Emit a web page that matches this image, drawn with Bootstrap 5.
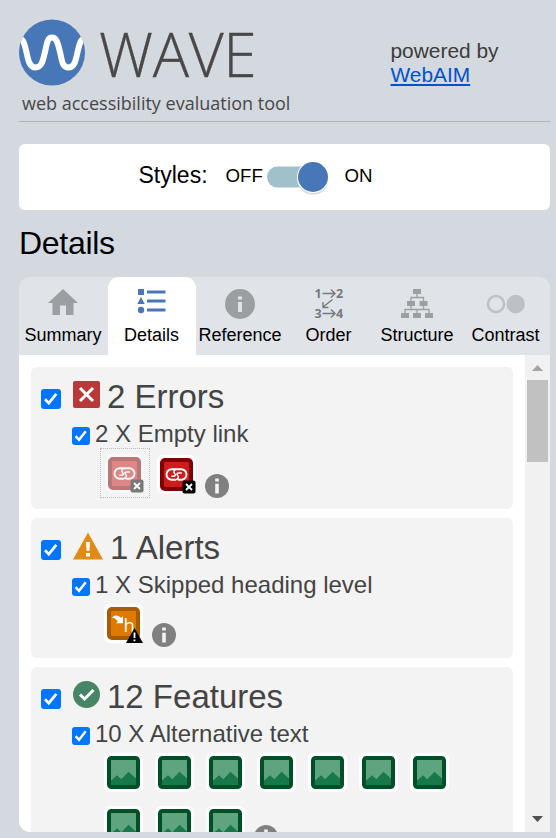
<!DOCTYPE html>
<html lang="en">
<head>
<meta charset="utf-8">
<title>WAVE</title>
<meta name="viewport" content="width=device-width, initial-scale=1">
<link href="https://cdn.jsdelivr.net/npm/bootstrap@5.3.0/dist/css/bootstrap.min.css" rel="stylesheet">
<style>
html,body{height:100%;overflow:hidden}
body{background:#d4d8df;color:#000;font-family:"Liberation Sans",Arial,sans-serif;line-height:1}
svg{display:block;flex:none}
.side{height:832px;padding:0 6px 0 19px}
.top-bar{height:122px;border-bottom:1px solid #aeb3b7}
.brand{width:371.5px;padding-top:19px}
.brand-name{font:300 60.5px/69px "Open Sans",sans-serif;color:#484848;height:67px;margin-left:14px;letter-spacing:-.3px;-webkit-text-stroke:.35px #484848}
.tagline{font:400 18px/26px "Open Sans",sans-serif;color:#484848;margin:4px 0 0 3px;white-space:nowrap}
.powered{font-size:20.9px;line-height:24px;color:#3c3c3c;padding-top:39px}
.powered a{color:#0052cc;text-underline-offset:2px;text-decoration-thickness:2px}
.styles-box{height:66px;margin-top:22px;border-radius:6px;padding-left:119.5px}
.styles-label{font-size:23px;line-height:62px;width:87px}
.onoff{font-size:18.7px;line-height:63px}
.toggle{width:62px;height:34px;margin:17px 0 0 3.5px}
.title{font-size:32px;line-height:40px;margin:13px 0 14px;font-weight:400;letter-spacing:-.3px}
.tab-strip{height:78px;background:#e0e3e8;border-radius:11px 11px 0 0}
.tab-strip .nav-link{padding:6px 0 0;color:#000;font-size:18px;border-radius:11px 11px 0 0;text-align:center;height:78px;white-space:nowrap}
.tab-strip .nav-link.active{background:#fff}
.tab-strip svg{margin:0 auto}
.tab-strip span{display:block;line-height:24px;margin-left:-.5px}
.panel{height:477px;border-radius:0 0 0 11px;overflow:hidden}
.results{width:506px;padding:12px 12px 0}
.group{background:#f3f3f3;border-radius:6px;margin-bottom:9px;color:#444;padding-left:10px}
.g1{height:142px}.g2{height:140px}.g3{height:190px}
.g-head{height:51px;font-size:33px;line-height:43px;padding-top:8px}
.g-head h3{font:inherit;margin:0}
.g-sub{height:31px;font-size:24px;line-height:31px;padding-left:31px;white-space:nowrap}
.box{background:#0075ff;border-radius:3px;width:20px;height:20px}
.g-head .box{margin:14px 12px 0 0}
.g-sub .box{width:18px;height:18px;margin:9px 5px 0 0}
.g-head .sym{margin:6px 7px 0 0}
.icons{padding-left:63px}
.next-row{padding-top:14px}
.tile{width:39px;height:39px;margin-right:12px}
.info{width:24px;height:24px;margin-top:19px;margin-left:-3px}
.picked{border:1px dotted #bbb;width:50px;height:50px;padding:5px 0 0 4px;margin:-1px 7px 0 -4px}
.picked svg{opacity:.5}
.linked{margin-top:6px}
.linked + .info{margin-top:25px}
.track{width:25px;background:#f1f1f1;padding-top:12px}
.thumb{width:21px;height:82px;background:#c1c1c1;margin-top:9px}
</style>
<script src="https://cdn.jsdelivr.net/npm/bootstrap@5.3.0/dist/js/bootstrap.bundle.min.js"></script>
</head>
<body>
<svg width="0" height="0" class="position-absolute" aria-hidden="true">
<defs>
<symbol id="check" viewBox="0 0 20 20"><path d="M4 10.2l3.8 4L15.3 4.8" fill="none" stroke="#fff" stroke-width="2.7"/></symbol>
<symbol id="info" viewBox="0 0 24 24"><circle cx="12" cy="12" r="12" fill="#808080"/><path d="M10.2 4.5h3.6v3h-3.6zM10.2 9.8h3.6v9.700h-3.6z" fill="#f3f3f3"/></symbol>
<symbol id="link" viewBox="0 0 39 39"><rect width="38.5" height="38.5" rx="6" fill="#fff"/><rect x="5" y="5" width="29" height="29" rx="3" fill="#cc1c1c" stroke="#800000" stroke-width="4"/>
<g fill="none" stroke="#fff" stroke-width="1.9" stroke-linecap="round"><path d="M18 24.800h-3.200a5.300 5.300 0 0 1 0-10.600h9.400a5.300 5.300 0 0 1 0 10.600h-2.700"/><path d="M24.300 17.900h-2.800c-2 0-1.900 1.700-.7 2.600 1.200 1 .6 4-2.600 4.300M19 14.300c-2.400.6-2.600 3.200-1.200 4.400 1 .9.700 2.600-1 2.600h-2" stroke-width="1.500"/></g>
<rect x="25.500" y="25.500" width="13" height="13" rx="2" fill="#000"/><path d="M29 29l6 6M35 29l-6 6" stroke="#fff" stroke-width="1.900"/></symbol>
<symbol id="alt" viewBox="0 0 39 39"><rect width="39" height="39" rx="6" fill="#fff"/><rect x="5" y="5" width="29" height="29" rx="2.500" fill="#5ea47f"/><path d="M6 28.500l7-6.200 4.300 4 7.200-7.500 8.500 7.700V33H6z" fill="#17794a"/><rect x="5" y="5" width="29" height="29" rx="2.500" fill="none" stroke="#004f27" stroke-width="4"/></symbol>
</defs>
</svg>
<main class="side d-flex flex-column">
<header class="top-bar d-flex flex-shrink-0">
<div class="brand flex-shrink-0">
<div class="d-flex">
<svg width="66" height="67" viewBox="0 0 66 67"><defs><clipPath id="disc"><circle cx="33" cy="33.500" r="33"/></clipPath></defs><circle cx="33" cy="33.500" r="33" fill="#4777b6"/><path clip-path="url(#disc)" d="M-3 19C4 18 5 23 7 31 9 40 10 48.500 16.500 48.500 23 48.500 24 41 26 33 28 25 28 18.500 33 18.500 38 18.500 39 25 41 33 43 41 43 48.500 49.500 48.500 56 48.500 57 40 59 31 61 23 62 18 69 19" fill="none" stroke="#fff" stroke-width="6"/></svg>
<div class="brand-name">WAVE</div>
</div>
<div class="tagline">web accessibility evaluation tool</div>
</div>
<div class="powered">powered by<br><a href="#">WebAIM</a></div>
</header>
<section class="styles-box bg-white d-flex flex-shrink-0">
<span class="styles-label">Styles:</span><span class="onoff">OFF</span>
<svg class="toggle" viewBox="0 0 62 34"><rect x="1" y="5.500" width="54" height="21" rx="10.500" fill="#a0c0ca"/><circle cx="47" cy="18" r="15.800" fill="#d9dce0"/><circle cx="47" cy="16" r="16" fill="#fff"/><circle cx="47" cy="16" r="15" fill="#4777b6"/></svg>
<span class="onoff ms-3">ON</span>
</section>
<h1 class="title flex-shrink-0">Details</h1>
<nav class="tab-strip nav nav-fill flex-nowrap flex-shrink-0 row g-0">
<a class="nav-link col" href="#"><svg width="48" height="40" viewBox="39 283 48 40"><path d="M63 289l15 14h-4.500v12H66v-9.500h-6v9.500h-7.500v-12H48z" fill="#9b9fa2"/></svg><span>Summary</span></a>
<a class="nav-link col active" href="#"><svg width="48" height="40" viewBox="128 283 48 40"><g fill="#4777b6"><path d="M138 289h6v6h-6zM147 290.500h18.500v3H147zM147 299.500h18.500v3H147zM147 308.500h18.500v3H147zM141 297l3.700 7h-7.400z"/><circle cx="141" cy="310" r="3.200"/></g></svg><span>Details</span></a>
<a class="nav-link col" href="#"><svg width="48" height="40" viewBox="216 283 48 40"><circle cx="240" cy="304" r="15" fill="#9b9fa2"/><path d="M238 296.500h4v3h-4zM238 302h4v10h-4z" fill="#e0e3e8"/></svg><span>Reference</span></a>
<a class="nav-link col" href="#"><svg width="48" height="40" viewBox="304.500 283 48 40"><g fill="#777a7c" font-family="Open Sans" font-weight="700" font-size="12.500"><text x="314" y="298">1</text><text x="335.500" y="298">2</text><text x="314" y="318">3</text><text x="335.500" y="318">4</text></g><path d="M322 293.500h12M330.500 289.500l4 4-4 4M322 313.500h12M330.500 309.500l4 4-4 4M332 299.500l-10 8M322.500 302v5.500h5.500" fill="none" stroke="#777a7c" stroke-width="1.400"/></svg><span>Order</span></a>
<a class="nav-link col" href="#"><svg width="48" height="40" viewBox="393 283 48 40"><path d="M413 289h8v5h-8zM407 301h8v5h-8zM419.500 301h8v5h-8zM401 313h8v5h-8zM413 313h8v5h-8zM425 313h8v5h-8z" fill="#9b9fa2"/><path d="M417 294v3.500M411 301v-3.500h12.500v3.500M411 306v3.500M423.500 306v3.500M405 313v-3.500h24v3.500M417 309.500v4" fill="none" stroke="#9b9fa2" stroke-width="1.300"/></svg><span>Structure</span></a>
<a class="nav-link col" href="#"><svg width="48" height="40" viewBox="482 283 48 40"><circle cx="496" cy="304" r="8" fill="none" stroke="#bdc0c4" stroke-width="2.500"/><circle cx="515.700" cy="304" r="9.200" fill="#bdc0c4"/></svg><span>Contrast</span></a>
</nav>
<div class="panel bg-white d-flex flex-shrink-0">
<div class="results flex-shrink-0">
<section class="group g1">
<div class="g-head d-flex"><svg class="box"><use href="#check"/></svg><svg class="sym" width="27" height="27"><rect width="27" height="27" rx="2" fill="#b93838"/><path d="M7 7l13 13M20 7L7 20" stroke="#fff" stroke-width="3"/></svg><h3>2 Errors</h3></div>
<div class="g-sub d-flex"><svg class="box"><use href="#check"/></svg>2 X Empty link</div>
<div class="icons d-flex"><div class="picked"><svg class="tile"><use href="#link"/></svg></div><svg class="tile linked"><use href="#link"/></svg><svg class="info"><use href="#info"/></svg></div>
</section>
<section class="group g2">
<div class="g-head d-flex"><svg class="box"><use href="#check"/></svg><svg class="sym" width="30" height="29"><path d="M15 .5L30 27.500H0z" fill="#e18b17"/><path d="M13 10h4l-.6 9h-2.800zM13 21h4v3.500h-4z" fill="#fff"/></svg><h3>1 Alerts</h3></div>
<div class="g-sub d-flex"><svg class="box"><use href="#check"/></svg>1 X Skipped heading level</div>
<div class="icons d-flex pt-1"><svg class="tile" viewBox="0 0 39 39"><rect width="39" height="39" rx="6" fill="#fff"/><rect x="5" y="5" width="29" height="29" rx="3" fill="#de7a00" stroke="#a85b00" stroke-width="4"/><path d="M8 13.500c2.500-3 6.500-2.600 9.300.4l1.700-1.700v7h-7l2-2c-1.700-2-3.700-3-6-3.700z" fill="#fff"/><text x="19.500" y="27.500" font-size="18.500" fill="#fff" font-family="Open Sans">h</text><path d="M30.500 24l8.500 15H22z" fill="#000"/><path d="M30.500 28.500v5.500M30.500 35.500v1.800" stroke="#fff" stroke-width="1.800"/></svg><svg class="info"><use href="#info"/></svg></div>
</section>
<section class="group g3">
<div class="g-head d-flex"><svg class="box"><use href="#check"/></svg><svg class="sym" width="27" height="27"><circle cx="13.500" cy="13.500" r="13.500" fill="#468565"/><path d="M7 13.500l4.500 4.500 9-9" fill="none" stroke="#fff" stroke-width="3"/></svg><h3>12 Features</h3></div>
<div class="g-sub d-flex"><svg class="box"><use href="#check"/></svg>10 X Alternative text</div>
<div class="icons d-flex pt-1"><svg class="tile"><use href="#alt"/></svg><svg class="tile"><use href="#alt"/></svg><svg class="tile"><use href="#alt"/></svg><svg class="tile"><use href="#alt"/></svg><svg class="tile"><use href="#alt"/></svg><svg class="tile"><use href="#alt"/></svg><svg class="tile"><use href="#alt"/></svg></div>
<div class="icons next-row d-flex"><svg class="tile"><use href="#alt"/></svg><svg class="tile"><use href="#alt"/></svg><svg class="tile"><use href="#alt"/></svg><svg class="info"><use href="#info"/></svg></div>
</section>
</div>
<div class="track d-flex flex-column align-items-center"><svg width="25" height="4" overflow="visible"><path d="M7 4h11l-5.500-6z" fill="#a3a3a3"/></svg><div class="thumb"></div><svg width="25" height="10" class="mt-auto mb-2"><path d="M7 2h11l-5.500 6z" fill="#505050"/></svg></div>
</div>
</main>
</body>
</html>
